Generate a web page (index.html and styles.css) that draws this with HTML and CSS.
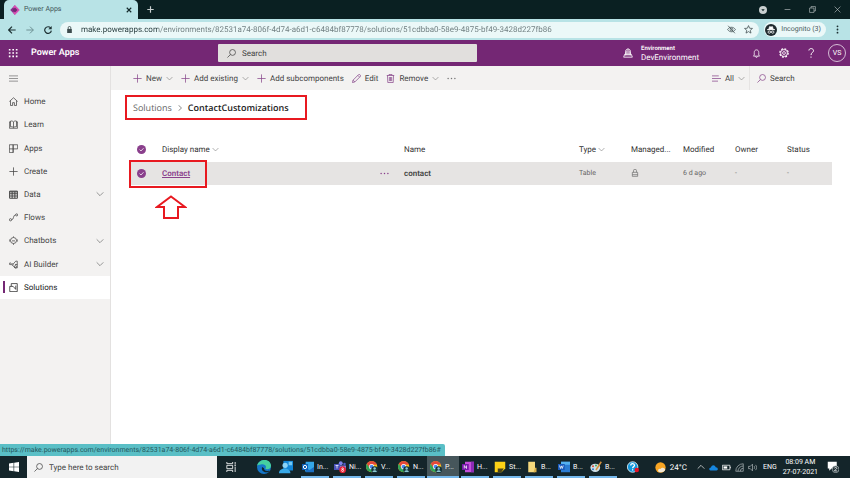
FILE: index.html
```html
<!DOCTYPE html>
<html lang="en">

<head>
  <meta charset="UTF-8" />
  <meta name="viewport" content="width=device-width, initial-scale=1.0"/>
  <title>Power Apps</title>
  <link rel="stylesheet" href="styles.css">
</head>

<body>
  <!-- shared icons -->
  <svg class="defs" width="0" height="0">
    <symbol id="plus" viewBox="0 0 12 12"><path d="M6 0.5v11M0.5 6h11"/></symbol>
    <symbol id="down" viewBox="0 0 12 12"><path d="M1 3.5l5 5 5-5"/></symbol>
    <symbol id="find" viewBox="0 0 12 12"><circle cx="7.4" cy="4.6" r="3.9"/><path d="M4.6 7.4L0.6 11.4"/></symbol>
    <symbol id="dots" viewBox="0 0 12 12"><g fill="currentColor" stroke="none"><circle cx="1.5" cy="6" r="1"/><circle cx="6" cy="6" r="1"/><circle cx="10.5" cy="6" r="1"/></g></symbol>
    <symbol id="tick" viewBox="0 0 12 12"><circle cx="6" cy="6" r="6" fill="#8a3f8c" stroke="none"/><path d="M3.4 6.1l1.9 1.9 3.4-3.7" stroke="#fff"/></symbol>
    <symbol id="chrome" viewBox="0 0 16 16"><g stroke="none"><circle cx="7.5" cy="7.5" r="7.5" fill="#f5c518"/><path d="M1 3.8A7.5 7.5 0 0 1 14 3.8L14.3 5H7.5L4.5 9.4z" fill="#e5473b"/><path d="M1 3.8A7.5 7.5 0 0 0 7 15l3.2-5H5z" fill="#2fa35a"/><circle cx="7.5" cy="7.5" r="3.4" fill="#fff"/><circle cx="7.5" cy="7.5" r="2.6" fill="#4a87ed"/><circle cx="11.5" cy="11.5" r="4.5" fill="#17333a"/><circle cx="11.5" cy="10" r="1.6" fill="#8cc7d2"/><path d="M8.5 14.5c.5-3 5.500-3 6 0z" fill="#8cc7d2"/></g></symbol>
  </svg>

  <div class="tabstrip">
    <div class="tab">
      <svg class="i10" viewBox="0 0 12 12"><path d="M6 0L0.300 6 6 12V8L8 6 6 4z" fill="#8c2f8f" stroke="none"/><path d="M6 0l5.700 6L6 12 3.500 9.200 7 6 3.500 2.800z" fill="#d94fb4" stroke="none"/><path d="M6 3l3 3-3 3-3-3z" fill="#742774" stroke="none"/></svg>
      <span>Power Apps</span>
      <button class="close" aria-label="Close tab"><svg class="i6" viewBox="0 0 12 12"><path d="M1.500 1.500l9 9M10.500 1.500l-9 9" stroke-width="2.200"/></svg></button>
    </div>
    <button class="newtab" aria-label="New tab"><svg class="i7" viewBox="0 0 12 12"><path d="M6 0.500v11M0.500 6h11" stroke-width="2"/></svg></button>
    <div class="window-btns">
      <button aria-label="Search tabs"><svg class="i8" viewBox="0 0 12 12"><circle cx="6" cy="6" r="6" fill="#c9cfd0" stroke="none"/><path d="M3.500 5h5L6 8z" fill="#0a2022" stroke="none"/></svg></button>
      <button aria-label="Minimize"><svg class="i7" viewBox="0 0 12 12"><path d="M1 6h10"/></svg></button>
      <button aria-label="Restore"><svg class="i7" viewBox="0 0 12 12"><path d="M1 3.500h7.500V11H1zM3.500 3.500V1H11v7.500H8.500"/></svg></button>
      <button aria-label="Close"><svg class="i7" viewBox="0 0 12 12"><path d="M1 1l10 10M11 1L1 11"/></svg></button>
    </div>
  </div>

  <div class="toolbar">
    <button aria-label="Back"><svg class="i8" viewBox="0 0 12 12"><path d="M11.500 6H1M6 1L1 6l5 5" stroke-width="1.800"/></svg></button>
    <button class="off" aria-label="Forward"><svg class="i8" viewBox="0 0 12 12"><path d="M0.500 6H11M6 1l5 5-5 5" stroke-width="1.500"/></svg></button>
    <button aria-label="Reload"><svg class="i8" viewBox="0 0 12 12"><path d="M10 3A5 5 0 1 0 11 7" stroke-width="1.800"/><path d="M11.500 0v5h-5z" fill="currentColor" stroke="none"/></svg></button>
    <div class="address">
      <svg class="i7" viewBox="0 0 12 12"><path d="M2 5h8v7H2z" fill="currentColor" stroke="none"/><path d="M3.800 5V3a2.200 2.200 0 0 1 4.400 0v2" stroke-width="1.500"/></svg>
      <input type="text" aria-label="Address" value="make.powerapps.com/environments/82531a74-806f-4d74-a6d1-c6484bf87778/solutions/51cdbba0-58e9-4875-bf49-3428d227fb86">
      <svg class="i9" viewBox="0 0 12 12"><path d="M0.800 6c2.400-4 8-4 10.400 0-2.400 4-8 4-10.400 0zM1.500 1l9 10"/><circle cx="6" cy="6" r="1.800"/></svg>
      <svg class="i9" viewBox="0 0 12 12"><path d="M6 0.800l1.500 3.500 3.800.3-2.900 2.500.9 3.700L6 8.800l-3.300 2 .9-3.700L.7 4.600l3.800-.3z"/></svg>
    </div>
    <button class="incognito">
      <svg class="i12" viewBox="0 0 16 16"><circle cx="8" cy="8" r="8" fill="#202a2e" stroke="none"/><path d="M3 7.500h10L10.800 7l-.8-3.500-2 .5-2-.5L5.200 7z" fill="#fff" stroke="#fff"/><circle cx="5.700" cy="10.800" r="1.600" stroke="#fff"/><circle cx="10.300" cy="10.800" r="1.600" stroke="#fff"/><path d="M7 10.500h2" stroke="#fff"/></svg>
      Incognito (3)
    </button>
    <button aria-label="Menu"><svg class="i9" viewBox="0 0 12 12"><g fill="currentColor" stroke="none"><circle cx="6" cy="1.800" r="1.200"/><circle cx="6" cy="6" r="1.200"/><circle cx="6" cy="10.200" r="1.200"/></g></svg></button>
  </div>

  <header class="header">
    <div class="brand">
      <button aria-label="App launcher"><svg class="i10" viewBox="0 0 12 12"><path d="M1 2h11M1 6h11M1 10h11" stroke-width="1.900" stroke-dasharray="2 2.200"/></svg></button>
      <b>Power Apps</b>
    </div>
    <label class="searchbox">
      <svg class="i9"><use href="#find"/></svg>
      <input type="text" placeholder="Search" aria-label="Search">
    </label>
    <div class="header-right">
      <svg class="i10" viewBox="0 0 12 12"><path d="M3 9V4.500C3 0 9 0 9 4.500V9M0.800 11h10.400L10 7.500H2zM4.500 3v6M7.500 3v6M6 1v8" /></svg>
      <div class="env"><small>Environment</small><span>DevEnvironment</span></div>
      <button aria-label="Notifications"><svg class="i9" viewBox="0 0 12 12"><path d="M2 9.500h8L9 8V4.500C9 0 3 0 3 4.500V8zM4.800 9.800c0 2 2.400 2 2.400 0"/></svg></button>
      <button aria-label="Settings"><svg class="i10" viewBox="0 0 12 12"><circle cx="6" cy="6" r="5" stroke-width="1.500" stroke-dasharray="2.300 1.620"/><circle cx="6" cy="6" r="4.100"/><circle cx="6" cy="6" r="1.700"/></svg></button>
      <button aria-label="Help"><svg class="i10" viewBox="0 0 12 12"><path d="M3.500 3C3.500-.2 9 0 9 3.200 9 5.300 6 5.500 6 8.500M6 10.200v1.500" stroke-width="1.200"/></svg></button>
      <button class="avatar">VS</button>
    </div>
  </header>

  <div class="container">
    <div class="left">
      <button class="burger" aria-label="Toggle navigation"><svg class="i9" viewBox="0 0 12 12"><path d="M0 2.500h12M0 6h12M0 9.500h12"/></svg></button>
      <nav>
        <a href="#"><svg class="i9" viewBox="0 0 12 12"><path d="M0.500 6L6 1l5.500 5M2 5v6.300h2.800V7.500h2.400v3.800H10V5"/></svg><span>Home</span></a>
        <a href="#"><svg class="i9" viewBox="0 0 12 12"><path d="M6 2.500C4.500 1 2.500 1.200 2 1.500V9c1.500-.3 3 0 4 1.200C7 9 8.500 8.700 10 9V1.500C9 1.200 7.300 1 6 2.500zV10M2 2.500H.5V11h11V2.500H10"/></svg><span>Learn</span></a>
        <a href="#"><svg class="i9" viewBox="0 0 12 12"><path d="M0.500 1h5v10.500h-5zM0.500 6.500h11M5.500 1h6v5.500M5.500 1v10.500"/></svg><span>Apps</span></a>
        <a href="#"><svg class="i9"><use href="#plus"/></svg><span>Create</span></a>
        <a href="#"><svg class="i9" viewBox="0 0 12 12"><path d="M0.800 1.500h10.400v9.500H0.800zM0.800 2.500h10.400M0.800 5h10.400M0.800 8h10.400M4.200 2v9M7.800 2v9" stroke-width="1.300"/></svg><span>Data</span><svg class="i8 arrow"><use href="#down"/></svg></a>
        <a href="#"><svg class="i9" viewBox="0 0 12 12"><circle cx="2" cy="9" r="1.500"/><circle cx="10.200" cy="2.500" r="1.400"/><path d="M3.500 9C7 9 5 2.500 8.800 2.500"/></svg><span>Flows</span></a>
        <a href="#"><svg class="i9" viewBox="0 0 12 12"><circle cx="6" cy="6" r="4"/><path d="M6 0.500V2M1 4.500v3M11 4.500v3M4 6.500h4M6 10v1.800"/></svg><span>Chatbots</span><svg class="i8 arrow"><use href="#down"/></svg></a>
        <a href="#"><svg class="i9" viewBox="0 0 12 12"><circle cx="1.600" cy="5" r="1.200"/><circle cx="4.500" cy="6" r="1"/><path d="M5.500 5.500L9 1.500h2v9H8L5 7M8 6h3"/><circle cx="8.500" cy="9" r="1.500"/></svg><span>AI Builder</span><svg class="i8 arrow"><use href="#down"/></svg></a>
        <a href="#" class="active"><svg class="i9" viewBox="0 0 12 12"><path d="M1 4.500V11.500h10V0.800H3V4.500H1M3 4.500h2.500L9 8.500V3.500"/></svg><span>Solutions</span></a>
      </nav>
    </div>

    <main class="right">
      <div class="commands">
        <button><svg class="i9"><use href="#plus"/></svg>New<svg class="i7 grey"><use href="#down"/></svg></button>
        <button><svg class="i9"><use href="#plus"/></svg>Add existing<svg class="i7 grey"><use href="#down"/></svg></button>
        <button><svg class="i9"><use href="#plus"/></svg>Add subcomponents</button>
        <button><svg class="i9" viewBox="0 0 12 12"><path d="M0.600 11.400l.8-3.200L8.800.8c1.200-1 3.400 1.200 2.400 2.400L3.800 10.600zM7.800 1.800l2.400 2.400M1.400 8.200l2.400 2.400"/></svg>Edit</button>
        <button><svg class="i9" viewBox="0 0 12 12"><path d="M1 2h10M4 2V.6h4V2M2 2l.4 9.400h7.200L10 2M4.500 4v5.500M6 4v5.500M7.500 4v5.500"/></svg>Remove<svg class="i7 grey"><use href="#down"/></svg></button>
        <button aria-label="More commands"><svg class="i9 grey"><use href="#dots"/></svg></button>
        <div class="commands-right">
          <button><svg class="i9" viewBox="0 0 12 12"><path d="M0 2.500h9M0 6h12M0 9.500h8"/></svg>All<svg class="i7 grey"><use href="#down"/></svg></button>
          <label><svg class="i9"><use href="#find"/></svg><input type="text" placeholder="Search" aria-label="Search solution"></label>
        </div>
      </div>

      <div class="content">
        <div class="breadcrumb">
          <a href="#">Solutions</a>
          <svg class="i6" viewBox="0 0 12 12"><path d="M3 0.500L9 6l-6 5.500" stroke-width="1.500"/></svg>
          <b>ContactCustomizations</b>
        </div>

        <table>
          <thead>
            <tr>
              <th class="c-check"><svg class="i9"><use href="#tick"/></svg></th>
              <th>Display name <svg class="i7 grey"><use href="#down"/></svg></th>
              <th class="c-more"></th>
              <th class="c-name">Name</th>
              <th class="c-small">Type <svg class="i7 grey"><use href="#down"/></svg></th>
              <th class="c-small">Managed...</th>
              <th class="c-small">Modified</th>
              <th class="c-small">Owner</th>
              <th class="c-last">Status</th>
            </tr>
          </thead>
          <tbody>
            <tr>
              <td class="c-check marked"><svg class="i9"><use href="#tick"/></svg>
                <svg class="pointer" viewBox="0 0 32 24"><path d="M16 1.500L30 12h-7v11H9V12H2z"/></svg>
              </td>
              <td><a href="#">Contact</a></td>
              <td class="purple"><svg class="i9"><use href="#dots"/></svg></td>
              <td><b>contact</b></td>
              <td class="dim">Table</td>
              <td class="dim"><svg class="i8" viewBox="0 0 12 12"><path d="M2 5h8v6H2zM3.800 5V2.500a2.200 2.200 0 0 1 4.400 0V5M2 8.500h8"/></svg></td>
              <td class="dim">6 d ago</td>
              <td class="dim">-</td>
              <td class="dim">-</td>
            </tr>
          </tbody>
        </table>
      </div>
    </main>
    <div class="status">https://make.powerapps.com/environments/82531a74-806f-4d74-a6d1-c6484bf87778/solutions/51cdbba0-58e9-4875-bf49-3428d227fb86#</div>
  </div>

  <footer class="taskbar">
    <button class="start" aria-label="Start"><svg class="i10" viewBox="0 0 12 12"><path d="M0 1.700L5.500 1v4.700H0zM6.200.9L12 0v5.700H6.200zM0 6.300h5.500V11L0 10.300zM6.200 6.300H12V12l-5.800-.9z" fill="#fff" stroke="none"/></svg></button>
    <label class="tasksearch"><svg class="i9"><use href="#find"/></svg><input type="text" placeholder="Type here to search" aria-label="Type here to search"></label>
    <button class="taskview" aria-label="Task view"><svg class="i10" viewBox="0 0 12 12"><path d="M1 0v2h7V0M1 4h7v4H1zM1 12v-2h7v2M11 0v3M11 5.500V12M10 4h2"/></svg></button>
    <div class="pinned">
      <button aria-label="Edge"><svg class="i13" viewBox="0 0 16 16"><g stroke="none"><circle cx="8" cy="8" r="8" fill="#1677c9"/><path d="M0 7C2-2 15-2 16 6c.3 4-4 5.500-6.500 4 2.500-4-2-6-5-5C2 5 .5 6 0 7z" fill="#45cfa0"/><path d="M6 8c-2 4 3 8 8 5 1-.5 0-1-1-.7-3 1-5-1-5-3z" fill="#14252a"/></g></svg></button>
      <button aria-label="People"><svg class="i13" viewBox="0 0 16 16"><g stroke="none"><path d="M5 1h11v11H5z" fill="#1286d8"/><path d="M11 2h4v4h-4z" fill="#74c8f2"/><circle cx="7" cy="6" r="3" fill="#8bd4f7"/><path d="M0 15c0-7 13-7 13 0z" fill="#39a9e8"/></g></svg></button>
    </div>
    <div class="apps">
      <button><svg class="i12" viewBox="0 0 16 16"><g stroke="none"><path d="M5 1h11v13H4z" fill="#35a7e8"/><path d="M5 9l5 3 6-4v7H5z" fill="#1b6fc2"/><path d="M0 4h8v8H0z" fill="#0f61b5"/></g><circle cx="4" cy="8" r="2.200" stroke="#fff" stroke-width="1.300"/></svg>In...</button>
      <button><svg class="i12" viewBox="0 0 16 16"><g stroke="none"><circle cx="9" cy="3" r="2.600" fill="#7b83eb"/><circle cx="14" cy="4" r="1.700" fill="#5059c9"/><path d="M5 6h11v6H5z" fill="#7b83eb"/><path d="M0 4h8v8H0z" fill="#4b53bc"/><circle cx="11.500" cy="11.500" r="4.500" fill="#e42235"/></g><path d="M2 6h4M4 6v4" stroke="#fff"/><circle cx="11.500" cy="10.300" r="1.100" stroke="#fff"/><circle cx="11.500" cy="12.700" r="1.300" stroke="#fff"/></svg>Ni...</button>
      <button><svg class="i12"><use href="#chrome"/></svg>V...</button>
      <button><svg class="i12"><use href="#chrome"/></svg>N...</button>
      <button class="current"><svg class="i12"><use href="#chrome"/></svg>P...</button>
      <button><svg class="i12" viewBox="0 0 16 16"><path d="M4 1h12v14H4z" fill="#c54fdb" stroke="none"/><path d="M12 1h4v14h-4z" fill="#8d2bb5" stroke="none"/><path d="M0 4h9v8H0z" fill="#7719aa" stroke="none"/><path d="M3 10V6l3 4V6" stroke="#fff"/></svg>H...</button>
      <button><svg class="i12" viewBox="0 0 16 16"><path d="M1 1h14v9l-5 5H1z" fill="#fcd116" stroke="none"/><path d="M5 15v-5h8l-3 5z" fill="#4c4318" stroke="none"/></svg>St...</button>
      <button><svg class="i12" viewBox="0 0 16 16"><path d="M3 1h9v14H3z" fill="#f5d87c" stroke="none"/><path d="M12 9h2v6h-4z" fill="#d8ae48" stroke="none"/></svg>B...</button>
      <button><svg class="i12" viewBox="0 0 16 16"><path d="M4 1h12v14H4z" fill="#2b7cd3" stroke="none"/><path d="M4 1h12v4H4z" fill="#54b0f0" stroke="none"/><path d="M0 4h9v8H0z" fill="#185abd" stroke="none"/><path d="M2 6l1.300 4L4.500 6.500 5.700 10 7 6" stroke="#fff"/></svg>B...</button>
      <button><svg class="i12" viewBox="0 0 16 16"><ellipse cx="7" cy="9" rx="6.500" ry="5.500" fill="#cfe0e8" stroke="none"/><g stroke="none"><circle cx="4" cy="7" r="1.300" fill="#d84b36"/><circle cx="8" cy="6" r="1.300" fill="#3ba55b"/><circle cx="4" cy="11" r="1.300" fill="#2878cc"/></g><path d="M15 1L8 12" stroke="#d6913c" stroke-width="2"/></svg>B...</button>
    </div>
    <div class="tray">
      <svg class="i12 help" viewBox="0 0 16 16"><circle cx="7.500" cy="8" r="7" fill="#1296db" stroke="#fff"/><path d="M5 6c0-3.500 5-3 5 0 0 1.500-2.500 1.500-2.500 3.500M7.500 11v1.500" stroke="#fff" stroke-width="1.700"/><circle cx="13" cy="12" r="3" fill="#e81123" stroke="none"/></svg>
      <svg class="i11" viewBox="0 0 16 16"><circle cx="8" cy="8" r="7.500" fill="#f8a624" stroke="none"/><path d="M5 14c-2-4 2-5 3-4 2-3 6-2 7 1-1 4-6 5-10 3z" fill="#f1e8d6" stroke="none"/></svg>
      <span class="temp">24°C</span>
      <svg class="i8" viewBox="0 0 12 12"><path d="M1 8.500l5-5 5 5"/></svg>
      <svg class="i9" viewBox="0 0 12 12"><path d="M2 10c-3-1-1.500-4 .5-4C4 1.500 8 2.500 9 5.500c3 0 4 4 1 4.500z" fill="#1686e0" stroke="none"/></svg>
      <svg class="i9" viewBox="0 0 12 12"><path d="M0.500 3h10v6H0.500zM11.500 5v2"/><path d="M2 4.500h5v3H2z" fill="#fff" stroke="none"/></svg>
      <svg class="i9 faded" viewBox="0 0 12 12"><path d="M1 11A10 10 0 0 1 11 1v10zM4 11a7 7 0 0 1 7-7M7 11a4 4 0 0 1 4-4"/></svg>
      <svg class="i9 faded" viewBox="0 0 12 12"><path d="M0.500 4.500H3l3-3v9l-3-3H.5zM8 4c1 1 1 3 0 4M10 2.500c2 2 2 5 0 7"/></svg>
      <span class="lang">ENG</span>
      <time class="clock">08:09 AM<br>27-07-2021</time>
      <svg class="i12" viewBox="0 0 16 16"><path d="M1 1h12v9H6l-3 3v-3H1z" fill="#fff" stroke="none"/><circle cx="11.500" cy="11" r="4.500" fill="#26363b" stroke="#aab3b5"/><path d="M10 9.800c0-1.800 3-1.600 3 0 0 1.200-3 2-3 3.400h3.200" stroke="#fff"/></svg>
    </div>
  </footer>
</body>

</html>
```
FILE: styles.css
```css
* { box-sizing: border-box; }
body {
  margin: 0;
  height: 100vh;
  display: flex;
  flex-direction: column;
  overflow: hidden;
  font-family: Roboto, 'Open Sans', sans-serif;
  font-size: 8px;
  line-height: 13px;
  text-rendering: geometricPrecision;
  color: #444;
  background: #fff;
}
button, input { font: inherit; color: inherit; border: 0; padding: 0; background: none; text-rendering: inherit; }
button { display: flex; align-items: center; justify-content: center; white-space: nowrap; flex: none; }
input { min-width: 0; outline: 0; }
input::placeholder { color: inherit; opacity: 1; }
a { color: inherit; text-decoration: none; }
b { font-weight: 600; }
svg { flex: none; fill: none; stroke: currentColor; stroke-width: 1; }
.defs { position: absolute; }
.i6 { width: 6px; height: 6px; }
.i7 { width: 7px; height: 7px; }
.i8 { width: 8px; height: 8px; }
.i9 { width: 9px; height: 9px; }
.i10 { width: 10px; height: 10px; }
.i11 { width: 11px; height: 11px; }
.i12 { width: 12px; height: 12px; }
.i13 { width: 14px; height: 14px; }
.grey { color: #777; }

/* browser */
.tabstrip { flex: none; height: 19px; display: flex; background: #0a2022; color: #c9cfd0; padding-left: 4px; }
.tab {
  width: 134px;
  display: flex;
  align-items: center;
  gap: 4px;
  padding: 0 6px;
  background: #b8e3e6;
  color: #3f5558;
  font-size: 7px;
  border-radius: 5px 5px 0 0;
}
.tab .close { margin-left: auto; color: #12282a; }
.newtab { width: 24px; }
.window-btns { display: flex; margin-left: auto; }
.window-btns button { width: 25px; }

.toolbar {
  flex: none;
  height: 21px;
  display: flex;
  align-items: center;
  gap: 10px;
  padding: 0 8px;
  background: #b8e3e6;
  color: #1c2f31;
}
.toolbar .off { color: #6f9194; }
.address {
  flex: 1;
  min-width: 0;
  height: 16px;
  display: flex;
  align-items: center;
  gap: 8px;
  margin-left: -2px;
  padding: 0 6px;
  border-radius: 8px;
  background: #ebf8f8;
  color: #3d4b4d;
}
.address input {
  flex: 1;
  color: #6c7b7d;
  background: linear-gradient(90deg, #24393b 77px, #6c7b7d 77px);
  -webkit-background-clip: text;
  background-clip: text;
  -webkit-text-fill-color: transparent;
}
.incognito { height: 15px; gap: 4px; margin: 0 -3px 0 -5px; padding: 0 5px 0 1px; border-radius: 8px; background: #ebf8f8; color: #4a5a5c; font-size: 7px; }

/* app header */
.header { flex: none; height: 26px; display: flex; align-items: center; background: #742774; color: #fff; }
.brand { width: 218px; display: flex; align-items: center; gap: 13px; padding-left: 8px; font-size: 9px; }
.searchbox {
  width: 30.5%;
  height: 18px;
  display: flex;
  align-items: center;
  gap: 6px;
  padding: 0 9px;
  border-radius: 1px;
  background: #e1dfdd;
  color: #444;
}
.header-right { display: flex; align-items: center; margin-left: auto; padding-right: 4px; }
.header-right button { width: 27px; }
.env { width: 102px; margin-left: 8px; line-height: 9px; }
.env small, .env span { display: block; font-size: 8px; }
.env small { font-size: 6px; line-height: 8px; font-weight: 600; }
.header-right .avatar { width: 18px; height: 18px; margin-left: 4px; border: 1px solid #d5bdd5; border-radius: 50%; font-size: 7px; }

/* page */
.container { flex: 1; min-height: 0; display: flex; position: relative; }
.left { flex: none; width: 111px; background: #f3f2f1; border-right: 1px solid #e3e1e0; }
.burger { width: 27px; height: 24px; color: #777; }
.left nav { height: 209px; display: flex; flex-direction: column; }
.left nav a { flex: 1; display: flex; align-items: center; gap: 6px; padding: 0 6px 0 9px; }
.left nav .arrow { margin-left: auto; color: #666; }
.left nav .active {
  background: linear-gradient(#742774, #742774) 3px center / 2px 12px no-repeat #fff;
  color: #222;
}

.right { flex: 1; min-width: 0; }
.commands { height: 24px; display: flex; align-items: center; gap: 8px; padding-left: 22px; background: #f3f2f1; }
.commands button { gap: 4px; }
.commands svg:first-child:not(.grey) { color: #8a4a8c; }
.commands-right { margin-left: auto; display: flex; align-items: center; }
.commands-right label { width: 101px; height: 24px; display: flex; align-items: center; gap: 4px; margin-left: 4px; padding-left: 7px; border-left: 1px solid #e6e4e3; }
.commands-right input { width: 70px; }

.content { padding: 5px 18px 0 18px; }
.breadcrumb {
  width: 182px;
  height: 25px;
  margin-left: -4px;
  padding: 0 6px;
  display: flex;
  align-items: center;
  gap: 5px;
  border: 2px solid #e81920;
  font-family: 'Open Sans', sans-serif;
  font-size: 9px;
  line-height: 12px;
  color: #666;
}
.breadcrumb b { color: #222; }

table { width: 100%; margin-top: 16px; border-collapse: collapse; table-layout: fixed; }
th, td { padding: 0; text-align: left; font-weight: normal; white-space: nowrap; }
th { height: 26px; color: #333; }
td { height: 23px; background: #e6e4e3; }
th svg, td svg { vertical-align: middle; }
.c-check { width: 33px; padding-left: 8px; }
.c-more { width: 24px; }
.c-name { width: 175px; }
.c-small { width: 52px; }
.c-last { width: 45px; }
td a { color: #8a3f8c; font-weight: 600; text-decoration: underline; }
.purple { color: #8a3f8c; }
.dim { font-size: 7px; color: #666; }

/* highlight over the selected row */
.marked { position: relative; }
.marked::after { content: ""; position: absolute; left: 0; top: -2px; width: 74px; height: 24px; border: 2px solid #e81920; }
.pointer { position: absolute; left: 26px; top: 33px; width: 32px; height: 24px; stroke: #e81920; stroke-width: 2; }

.status {
  position: absolute;
  left: 0;
  bottom: 0;
  height: 12px;
  line-height: 12px;
  padding: 0 4px 0 2px;
  border-radius: 0 2px 0 0;
  background: #5abfc6;
  color: #23565b;
  font-size: 7px;
  white-space: nowrap;
}

/* taskbar */
.taskbar { flex: none; height: 22px; display: flex; background: #14252a; color: #fff; }
.start { width: 27px; }
.tasksearch { width: 190px; display: flex; align-items: center; gap: 6px; padding-left: 7px; background: #f2f2f2; color: #444; }
.tasksearch input { width: 150px; }
.taskview { width: 28px; }
.pinned { display: flex; padding: 0 2px 0 8px; }
.pinned button { width: 22px; }
.apps { display: flex; }
.apps button {
  width: 32px;
  gap: 3px;
  justify-content: flex-start;
  padding-left: 3px;
  font-size: 7px;
  background: linear-gradient(#76b9ed, #76b9ed) center bottom / 28px 2px no-repeat;
}
.apps .current { background-color: #46565b; background-size: 32px 2px; }
.tray { display: flex; align-items: center; gap: 4px; margin-left: auto; padding-right: 11px; }
.tray .help { margin-right: 12px; }
.tray .temp { margin-right: 6px; }
.tray .faded { color: #a5aeb0; }
.lang, .clock { font-size: 7px; }
.lang { margin-left: 2px; }
.clock { line-height: 10px; text-align: center; margin: 0 5px 0 2px; }
```
